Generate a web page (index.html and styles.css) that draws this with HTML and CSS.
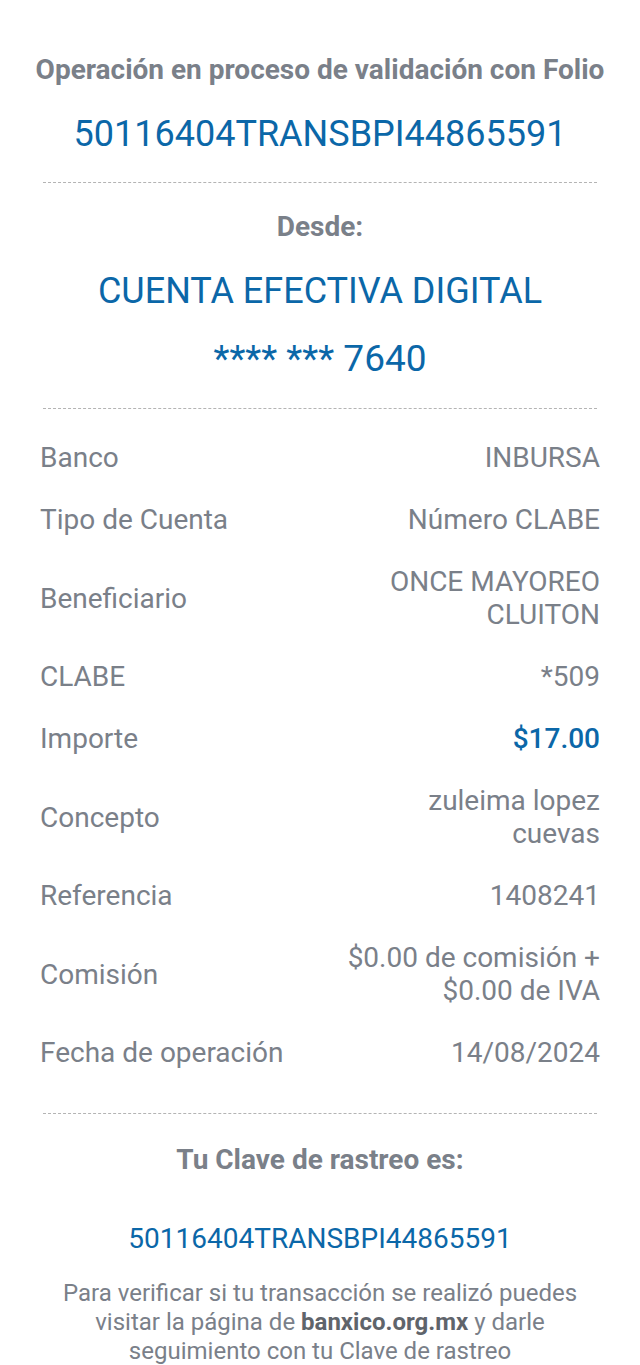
FILE: index.html
```html
<!DOCTYPE html>
<html lang="es">
<head>
    <meta charset="UTF-8">
    <meta name="viewport" content="width=device-width,initial-scale=1.0">
    <title>Comprobante de transferencia</title>
    <link rel="stylesheet" href="styles.css">
</head>
<body>
    <div class="receipt">

        <div class="folio">
            <div class="folio-title">Operación en proceso de validación con Folio</div>
            <div class="folio-num">50116404TRANSBPI44865591</div>
        </div>

        <div class="dash"></div>

        <div class="origin">
            <div class="origin-label">Desde:</div>
            <div class="origin-name">CUENTA EFECTIVA DIGITAL</div>
            <div class="origin-acct">**** *** 7640</div>
        </div>

        <div class="dash"></div>

        <div class="details">
            <div class="row">
                <div class="lbl">Banco</div>
                <div class="val">INBURSA</div>
            </div>
            <div class="row">
                <div class="lbl">Tipo de Cuenta</div>
                <div class="val">Número CLABE</div>
            </div>
            <div class="row">
                <div class="lbl">Beneficiario</div>
                <div class="val">ONCE MAYOREO<br>CLUITON</div>
            </div>
            <div class="row">
                <div class="lbl">CLABE</div>
                <div class="val">*509</div>
            </div>
            <div class="row">
                <div class="lbl">Importe</div>
                <div class="val amount">$17.00</div>
            </div>
            <div class="row">
                <div class="lbl">Concepto</div>
                <div class="val">zuleima lopez<br>cuevas</div>
            </div>
            <div class="row">
                <div class="lbl">Referencia</div>
                <div class="val">1408241</div>
            </div>
            <div class="row">
                <div class="lbl">Comisión</div>
                <div class="val">$0.00 de comisión +<br>$0.00 de IVA</div>
            </div>
            <div class="row">
                <div class="lbl">Fecha de operación</div>
                <div class="val">14/08/2024</div>
            </div>
        </div>

        <div class="dash"></div>

        <div class="tracking">
            <div class="tracking-title">Tu Clave de rastreo es:</div>
            <div class="tracking-num">50116404TRANSBPI44865591</div>
            <p class="tracking-note">Para verificar si tu transacción se realizó puedes visitar la página de <b>banxico.org.mx</b> y darle seguimiento con tu Clave de rastreo</p>
        </div>

    </div>
</body>
</html>
```

FILE: styles.css
```css
body{
    margin:0;
    background:#ffffff;
    font-family:Roboto,"Noto Sans",Arial,sans-serif;
    color:#7a8089;
}

.receipt{
    padding:0 40px 0 40px;
}

.dash{
    height:0;
    margin:0 3px;
    border-top:1px dashed #b4b4b4;
}

.folio{
    text-align:center;
    padding-top:52px;
    padding-bottom:26px;
}

.folio-title{
    font-size:28px;
    font-weight:700;
    line-height:36px;
    white-space:nowrap;
    margin:0 -10px;
}

.folio-num{
    margin-top:24px;
    font-size:36px;
    line-height:44px;
    color:#0b67a8;
}

.origin{
    text-align:center;
    padding-top:26px;
    padding-bottom:27px;
}

.origin-label{
    font-size:28px;
    font-weight:700;
    line-height:36px;
}

.origin-name{
    margin-top:24px;
    font-size:36px;
    line-height:44px;
    color:#0b67a8;
}

.origin-acct{
    margin-top:24px;
    font-size:37px;
    line-height:44px;
    color:#0b67a8;
}

.details{
    padding-top:18px;
    padding-bottom:29px;
}

.row{
    display:flex;
    justify-content:space-between;
    align-items:center;
    padding:14px 0 15px 0;
    font-size:28px;
    line-height:33px;
}

.val{
    text-align:right;
}

.amount{
    color:#0b67a8;
    font-weight:500;
}

.tracking{
    text-align:center;
    padding-top:28px;
}

.tracking-title{
    font-size:28px;
    font-weight:700;
    line-height:36px;
}

.tracking-num{
    margin-top:41px;
    font-size:28px;
    line-height:40px;
    color:#0b67a8;
}

.tracking-note{
    margin:20px 0 0 0;
    padding:0 12px;
    font-size:24px;
    line-height:29px;
}

.tracking-note b{
    color:#5f646b;
}
```
